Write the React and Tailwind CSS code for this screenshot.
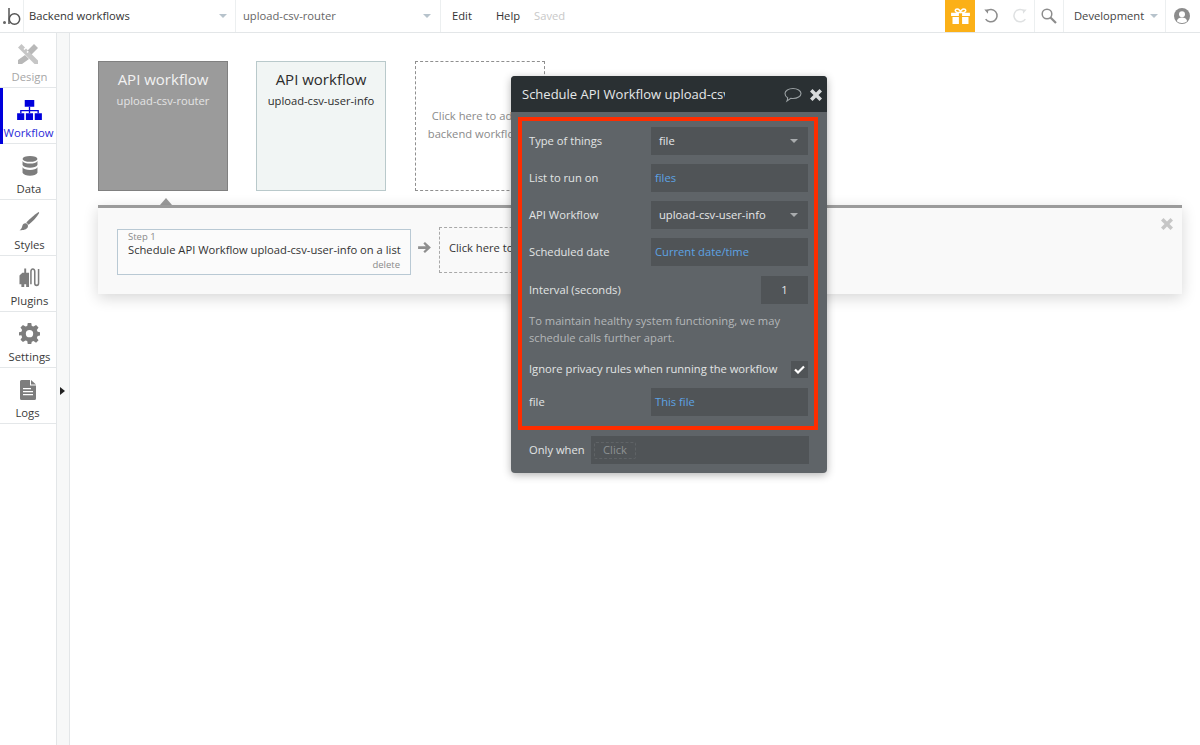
function Caret({ className = "" }) {
  return (
    <svg width="8" height="4" viewBox="0 0 8 4" className={className}>
      <path d="M0 0h8L4 4z" fill="currentColor" />
    </svg>
  );
}
function Nav({ label, active, muted, children, labelClass = "" }) {
  return (
    <div className="relative h-14 border-b border-[#e4e7e9] flex flex-col items-center pl-[3px]">
      {active && <div className="absolute left-0 top-0 h-14 w-[3px] bg-[#0000dc]" />}
      <div className="h-[25px] mt-[9px] flex items-center justify-center">{children}</div>
      <div className={`text-[11.3px] leading-[16px] mt-[3px] ${labelClass} ${active ? "text-[#2b2bd8]" : muted ? "text-[#a6a6a6]" : "text-[#3a3a3a]"}`}>{label}</div>
    </div>
  );
}
function Row({ label, children }) {
  return (
    <div className="flex items-center justify-between h-7">
      <span className="text-[11.2px] text-[#e2e4e5]">{label}</span>
      {children}
    </div>
  );
}
function Field({ children, blue, caret }) {
  return (
    <div className={`w-[157px] h-7 bg-[#505457] flex items-center justify-between text-[11.2px] ${blue ? "pl-1 text-[#5da3e4]" : "pl-2 text-[#e6e7e8]"} pr-[10px]`}>
      <span>{children}</span>
      {caret && <Caret className="text-[#a9acae]" />}
    </div>
  );
}
export default function App() {
  return (
    <div className="w-[1200px] h-[745px] overflow-hidden bg-white relative flex flex-col" style={{ fontFamily: '"Open Sans", sans-serif' }}>
      {/* top bar */}
      <div className="h-[33px] shrink-0 relative z-10 flex items-stretch border-b border-[#e3e6e8] bg-white text-[11.2px]">
        <div className="w-[24px] border-r border-[#eceff0] flex items-center justify-center">
          <svg width="20" height="18" viewBox="0 0 20 18" fill="none">
            <circle cx="2.500" cy="15.500" r="1.500" fill="#666" />
            <path d="M7 1v16" stroke="#555" strokeWidth="1.500" />
            <circle cx="12.500" cy="12" r="5.200" stroke="#555" strokeWidth="1.500" />
          </svg>
        </div>
        <div className="w-[212px] border-r border-[#eceff0] flex items-center justify-between pl-[5px] pr-[8px] text-[#333]">
          <span>Backend workflows</span>
          <Caret className="text-[#b7c3cc]" />
        </div>
        <div className="w-[205px] border-r border-[#eceff0] flex items-center justify-between pl-[7px] pr-[9px] text-[#666]">
          <span>upload-csv-router</span>
          <Caret className="text-[#b7c3cc]" />
        </div>
        <div className="flex items-center pl-[11px]">
          <span className="text-[#333]">Edit</span>
          <span className="text-[#333] ml-[24px]">Help</span>
          <span className="text-[#c8c8c8] ml-[14px]">Saved</span>
        </div>
        <div className="flex-1" />
        <div className="w-[30px] bg-[#fbb017] flex items-center justify-center">
          <svg width="19" height="16" viewBox="0 0 20 17">
            <path d="M5 1.500C6.500.2 9 1.500 10 4c1-2.500 3.500-3.800 5-2.500 1.200 1.200.2 2.800-1.500 3.200H6.500C4.800 4.300 3.800 2.700 5 1.500z" fill="none" stroke="#fff" strokeWidth="1.600" />
            <path d="M0 5h8.300v3.500H0zM11.700 5H20v3.500h-8.300zM1.500 9.500h6.800V17H1.500zM11.700 9.500h6.800V17h-6.800z" fill="#fff" />
          </svg>
        </div>
        <div className="w-[60px] border-r border-[#eceff0] flex items-center justify-between pl-[8px] pr-[6px]">
          <svg width="16" height="16" viewBox="0 0 18 18" fill="none" stroke="#8c8c8c" strokeWidth="1.700">
            <path d="M4 3.500A7 7 0 1 1 3 12.500" />
            <path d="M1.500 1.800L6 1.800 5.500 6.500z" fill="#8c8c8c" stroke="none" />
          </svg>
          <svg width="16" height="16" viewBox="0 0 18 18" fill="none" stroke="#dfe1e2" strokeWidth="1.700">
            <path d="M14 3.500A7 7 0 1 0 15 12.500" />
            <path d="M16.500 1.800L12 1.800 12.500 6.500z" fill="#dfe1e2" stroke="none" />
          </svg>
        </div>
        <div className="w-[29px] border-r border-[#eceff0] flex items-center justify-center">
          <svg width="16" height="16" viewBox="0 0 16 16" fill="none" stroke="#8c8c8c">
            <circle cx="6" cy="6" r="4.800" strokeWidth="1.500" />
            <path d="M9.500 9.500L15 15" strokeWidth="2.200" />
          </svg>
        </div>
        <div className="w-[102px] border-r border-[#eceff0] flex items-center justify-between pl-[10px] pr-[7px] text-[#444]">
          <span>Development</span>
          <Caret className="text-[#b7c3cc]" />
        </div>
        <div className="w-[34px] pr-[2px] flex items-center justify-center">
          <svg width="16" height="16" viewBox="0 0 16 16">
            <circle cx="8" cy="8" r="8" fill="#8c8c8c" />
            <circle cx="8" cy="6.300" r="3" fill="#fff" />
            <path d="M2.800 13.200c.6-2.800 2.800-3.700 5.200-3.700s4.600.9 5.200 3.700A7 7 0 0 1 8 15a7 7 0 0 1-5.200-1.800z" fill="#fff" />
          </svg>
        </div>
      </div>

      <div className="flex-1 flex min-h-0 -mt-px">
        {/* sidebar */}
        <div className="w-[57px] shrink-0 border-r border-[#e3e6e8] bg-white">
          <Nav label="Design" muted>
            <svg width="20" height="20" viewBox="0 0 20 20" fill="#c6c6c6" className="ml-[-3px]">
              <path fillRule="evenodd" d="M3.500 0L7 3.500 5.500 5l1 1L8 4.500l2 2L8.500 8l1 1L11 7.500 20 16.500V20h-3.500L0 3.500z" />
              <path d="M16 0l4 4-6.500 6.500-4-4zM7 11l4 4-7 5H0v-4z" fill="#b8b8b8" />
            </svg>
          </Nav>
          <Nav label="Workflow" active labelClass="ml-[-2px]">
            <svg width="25" height="20" viewBox="0 0 26 21" fill="#0000dc">
              <path d="M8 0h10v7H8zM0 14h7.500v7H0zM9.200 14h7.500v7H9.200zM18.500 14H26v7h-7.500z" />
              <path d="M12.300 7h1.400v3.500h9.100V14h-1.400v-2.200H13.700V14h-1.400v-2.200H4.600V14H3.200v-3.500h9.100z" />
            </svg>
          </Nav>
          <Nav label="Data" labelClass="ml-[-1px]">
            <svg width="16" height="20" viewBox="0 0 17 22" fill="#7d7d7d">
              <ellipse cx="8.500" cy="3.200" rx="8.200" ry="3.200" />
              <path d="M.3 5.500c1 2 4.500 2.800 8.200 2.800s7.200-.8 8.200-2.800V10c-1 2-4.500 2.800-8.200 2.800S1.300 12 .3 10z" />
              <path d="M.3 12.500c1 2 4.500 2.800 8.200 2.800s7.200-.8 8.200-2.800V18.500c-1 2.300-4.500 3.300-8.200 3.300S1.300 20.800.3 18.500z" />
            </svg>
          </Nav>
          <Nav label="Styles">
            <svg width="21" height="20" viewBox="0 0 22 22" fill="#7d7d7d">
              <path d="M21 0c.5.3.7.700.6 1.200C19 6 14 11 10 14L7.500 11.500C11 8 16.500 3 21 0z" />
              <path d="M6.500 12.500c2 .2 3 1.500 2.800 3.300C9 19 5 20.500 0 20c2-1 2.500-2.500 3-4.300.4-1.800 1.700-3.200 3.500-3.200z" />
            </svg>
          </Nav>
          <Nav label="Plugins">
            <svg width="23" height="21" viewBox="0 0 23 22" fill="none" className="ml-[-1px]">
              <path d="M4 6h2V1.500h2V6h3V21H8v-3H6v3H3v-3H1V9z" fill="#7d7d7d" />
              <path d="M13 18V5c0-4 4-4 4 0v12c0 3 4 3 4 0V2" stroke="#7d7d7d" strokeWidth="1.600" />
            </svg>
          </Nav>
          <Nav label="Settings">
            <svg width="21" height="21" viewBox="0 0 24 24" fill="#7d7d7d" className="ml-[-1px]">
              <path fillRule="evenodd" d="M10 0h4l.6 3.300 2 .8L19.500 2.300l2.800 2.800-1.900 2.800.9 2.100L24 10.500v3.800l-2.700.5-.9 2.200 1.900 2.800-2.800 2.800-2.900-1.900-2 .8L14 24h-4l-.6-3.300-2-.8-2.900 1.900-2.800-2.800 1.900-2.800-.9-2.200L0 14.300v-3.800l2.700-.5.9-2.100-1.900-2.800 2.800-2.800 2.900 1.800 2-.8zM12 8a4.200 4.200 0 1 0 0 8.400A4.200 4.200 0 0 0 12 8z" />
            </svg>
          </Nav>
          <Nav label="Logs" labelClass="ml-[-4px]">
            <svg width="16" height="20" viewBox="0 0 16 20" className="ml-[-3px]">
              <path fillRule="evenodd" d="M1.500 0H10v5.500h6V18.500a1.500 1.500 0 0 1-1.500 1.500h-13A1.500 1.500 0 0 1 0 18.500v-17A1.500 1.500 0 0 1 1.500 0zM11 0l5 4.500h-5zM3 8v1.300h8V8zM3 11v1.300h10V11zM3 14v1.300h10V14z" fill="#7d7d7d" />
            </svg>
          </Nav>
        </div>
        {/* strip */}
        <div className="w-[13px] shrink-0 bg-[#f7f8f8] border-r border-[#e3e6e8] pt-[355px] pl-[3px]">
          <svg width="5" height="8" viewBox="0 0 5 8"><path d="M0 0l5 4-5 4z" fill="#222" /></svg>
        </div>
        {/* canvas */}
        <div className="flex-1 pl-[28px] pt-[29px] pr-[18px] bg-white">
          <div className="flex">
            <div className="w-[130px] h-[130px] bg-[#9b9b9b] border border-[#808080] flex flex-col items-center pt-[6px] relative">
              <div className="text-[15px] leading-[22px] text-[#f2f2f2]">API workflow</div>
              <div className="text-[11.2px] leading-[16px] mt-[3px] text-[#e4e4e4]">upload-csv-router</div>
              <svg width="12" height="7" viewBox="0 0 12 7" className="absolute left-[61px] top-[136px]"><path d="M0 7L6 0l6 7z" fill="#9b9b9b" /></svg>
            </div>
            <div className="ml-[28px] w-[130px] h-[130px] bg-[#f1f5f4] border border-[#b9c9cb] flex flex-col items-center pt-[6px]">
              <div className="text-[15px] leading-[22px] text-[#2c2c2c]">API workflow</div>
              <div className="text-[11.2px] leading-[16px] mt-[3px] text-[#2c2c2c]">upload-csv-user-info</div>
            </div>
            <div className="ml-[29px] w-[130px] h-[130px] border border-dashed border-[#8f8f8f] flex flex-col items-center pt-[45px] text-[11.2px] leading-[18px] text-[#8a8a8a] text-center whitespace-nowrap">
              <div>Click here to add a</div>
              <div className="mr-[4px]">backend workflows</div>
            </div>
          </div>
          <div className="mt-[14px] h-[89px] border-t-[3px] border-[#9b9b9b] bg-[#f9f9f9] shadow-[0_4px_14px_rgba(0,0,0,0.16)] relative flex items-start pl-[19px] pt-[21px]">
            <div className="w-[294px] h-[46px] border border-[#b9c9d4] bg-[#fbfbfb] pl-[10px] pr-[10px] flex flex-col">
              <div className="text-[9.5px] leading-[12px] text-[#8a8a8a] mt-[1px]">Step 1</div>
              <div className="text-[11.2px] leading-[14px] text-[#333] whitespace-nowrap">Schedule API Workflow upload-csv-user-info on a list</div>
              <div className="text-[9.5px] leading-[12px] text-[#8a8a8a] text-right mt-[2px]">delete</div>
            </div>
            <svg width="13" height="11" viewBox="0 0 14 12" className="ml-[7px] mt-[13px]">
              <path d="M7.500 0L14 6l-6.500 6-1.700-1.700L8.500 7.500H0v-3h8.500L5.800 1.700z" fill="#8f8f8f" />
            </svg>
            <div className="ml-[8px] mt-[-2px] w-[200px] h-[46px] border border-dashed border-[#a8a8a8] flex items-center pl-[9px] pb-[4px] text-[11.2px] text-[#333]">Click here to add an action</div>
            <svg width="12" height="12" viewBox="0 0 12 12" className="absolute right-[9px] top-[10px]">
              <path d="M2.500 0L6 3.500 9.500 0 12 2.500 8.500 6 12 9.500 9.500 12 6 8.500 2.500 12 0 9.500 3.500 6 0 2.500z" fill="#c6c6c6" />
            </svg>
          </div>
        </div>
      </div>

      {/* property editor */}
      <div className="absolute z-20 left-[511px] top-[76px] w-[316px] h-[397px] rounded-[4px] bg-[#5f6468] shadow-[0_2px_8px_rgba(0,0,0,0.3)] flex flex-col">
        <div className="h-[36px] shrink-0 bg-[#2a3033] rounded-t-[4px] flex items-center pl-[11px] pt-[2px]">
          <div className="w-[203px] overflow-hidden whitespace-nowrap text-[13px] text-[#e6e8e9]">Schedule API Workflow upload-csv-user-info on a list</div>
          <svg width="18" height="16" viewBox="0 0 18 16" fill="none" stroke="#9aa0a3" strokeWidth="1.100" className="ml-[59px]">
            <path d="M9 1.500c4.400 0 8 2.200 8 5s-3.600 5-8 5c-.8 0-1.500-.1-2.200-.2L3 14c.4-1 .7-2 .6-3.300C1.900 9.800 1 8.200 1 6.500c0-2.800 3.600-5 8-5z" />
          </svg>
          <svg width="12" height="12" viewBox="0 0 12 12" className="ml-[8px]">
            <path d="M2.500 0L6 3.500 9.500 0 12 2.500 8.500 6 12 9.500 9.500 12 6 8.500 2.500 12 0 9.500 3.500 6 0 2.500z" fill="#d8dbdc" />
          </svg>
        </div>
        <div className="mt-[5px] ml-[7px] w-[300px] h-[313px] shrink-0 border-[4px] border-[#ff2d00] pt-[6px] pl-[7px] pr-[6px] flex flex-col">
          <Row label="Type of things"><Field caret>file</Field></Row>
          <div className="h-[9px] shrink-0" />
          <Row label="List to run on"><Field blue>files</Field></Row>
          <div className="h-[9px] shrink-0" />
          <Row label="API Workflow"><Field caret>upload-csv-user-info</Field></Row>
          <div className="h-[9px] shrink-0" />
          <Row label="Scheduled date"><Field blue>Current date/time</Field></Row>
          <div className="h-[10px] shrink-0" />
          <Row label="Interval (seconds)">
            <div className="w-[47px] h-7 bg-[#505457] flex items-center justify-center text-[11.2px] text-[#e6e7e8]">1</div>
          </Row>
          <div className="mt-[8px] text-[11.2px] leading-[17px] text-[#b4b7b9] whitespace-nowrap">
            <div>To maintain healthy system functioning, we may</div>
            <div>schedule calls further apart.</div>
          </div>
          <div className="mt-[15px] h-[17px] flex items-center justify-between">
            <span className="text-[11.2px] leading-[15px] mb-[2px] text-[#e2e4e5] whitespace-nowrap">Ignore privacy rules when running the workflow</span>
            <div className="w-[17px] h-[17px] bg-[#505457] flex items-center justify-center">
              <svg width="11" height="9" viewBox="0 0 11 9"><path d="M1 4.500L4 7.500 10 1.500" fill="none" stroke="#fff" strokeWidth="2.200" /></svg>
            </div>
          </div>
          <div className="h-[10px] shrink-0" />
          <Row label="file"><Field blue>This file</Field></Row>
        </div>
        <div className="mt-[6px] ml-[18px] mr-[18px] flex items-center h-7 justify-between">
          <span className="text-[11.2px] text-[#e2e4e5]">Only when</span>
          <div className="w-[218px] h-7 bg-[#505457] flex items-center pl-[3px]">
            <div className="w-[42px] h-[17px] border border-dashed border-[#5f6366] rounded-[2px] flex items-center justify-center text-[11.2px] text-[#8d9193]">Click</div>
          </div>
        </div>
      </div>
    </div>
  );
}
